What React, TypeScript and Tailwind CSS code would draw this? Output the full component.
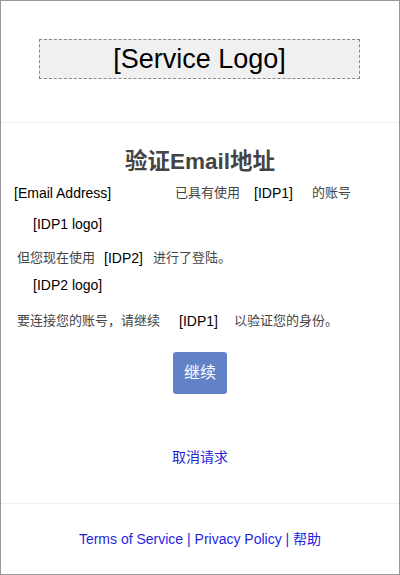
import React from "react";

const F = { fontFamily: '"Liberation Sans", "Noto Sans CJK SC", Arial, sans-serif' };

export default function App() {
  return (
    <div
      className="w-[400px] h-[575px] border border-[#999] bg-white flex flex-col overflow-hidden"
      style={F}
    >
      <div className="h-[121px] pt-[38px] pl-[38px] flex">
        <div className="w-[321px] h-[40px] border border-dashed border-[#888] bg-[#f0f0f0] flex items-center justify-center text-[27px] text-black leading-none">
          [Service Logo]
        </div>
      </div>
      <div className="h-px bg-[#eee]" />
      <div className="pt-[25px] h-[53px] text-center text-[22.5px] leading-[28px] font-bold text-[#444]">
        验证Email地址
      </div>
      <div className="mt-[7px] h-[20px] flex items-center text-[14px] leading-[20px]">
        <span className="pl-[13px] w-[174px] text-black">[Email Address]</span>
        <span className="text-[13px] text-[#444] w-[79px]">已具有使用</span>
        <span className="text-black w-[58px]">[IDP1]</span>
        <span className="text-[13px] text-[#444]">的账号</span>
      </div>
      <div className="mt-[11px] h-[20px] pl-[32px] text-[14px] leading-[20px] text-black">[IDP1 logo]</div>
      <div className="mt-[14px] h-[20px] flex items-center pl-[16px] text-[14px] leading-[20px]">
        <span className="text-[13px] text-[#444] w-[87px]">但您现在使用</span>
        <span className="text-black w-[49px]">[IDP2]</span>
        <span className="text-[13px] text-[#444]">进行了登陆。</span>
      </div>
      <div className="mt-[7px] h-[20px] pl-[32px] text-[14px] leading-[20px] text-black">[IDP2 logo]</div>
      <div className="mt-[16px] h-[20px] flex items-center pl-[16px] text-[14px] leading-[20px]">
        <span className="text-[13px] text-[#444] w-[162px]">要连接您的账号，请继续</span>
        <span className="text-black w-[55px]">[IDP1]</span>
        <span className="text-[13px] text-[#444]">以验证您的身份。</span>
      </div>
      <div className="mt-[21px] flex justify-center">
        <button className="w-[54px] h-[42px] rounded-[3px] bg-[#6282c8] text-white text-[16px] flex items-center justify-center">
          继续
        </button>
      </div>
      <div className="mt-[53px] h-[20px] text-center text-[14px] leading-[20px] text-[#1f1fe0]">取消请求</div>
      <div className="mt-[36px] h-px bg-[#eee]" />
      <div className="mt-[25px] h-[20px] text-center text-[14px] leading-[20px] text-[#1f1fe0]">
        <span>Terms of Service</span>
        <span> | </span>
        <span>Privacy Policy</span>
        <span> | </span>
        <span>帮助</span>
      </div>
    </div>
  );
}
